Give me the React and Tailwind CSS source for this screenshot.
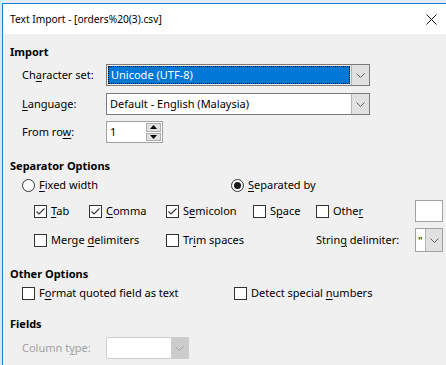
import React from "react";

const U = ({ children }) => <span className="underline underline-offset-2">{children}</span>;

const Chevron = ({ color = "#606060" }) => (
  <svg width="9" height="5" viewBox="0 0 9 5" fill="none">
    <path d="M0.5 0.5 L4.5 4.5 L8.5 0.5" stroke={color} strokeWidth="1" />
  </svg>
);

const Check = ({ checked }) => (
  <div className="w-[13px] h-[13px] border border-[#333] bg-white flex items-center justify-center shrink-0">
    {checked && (
      <svg width="11" height="11" viewBox="0 0 11 11" fill="none">
        <path d="M1.5 5.5 L4 8 L9.5 2.5" stroke="#333" strokeWidth="1.1" />
      </svg>
    )}
  </div>
);

const Radio = ({ on }) => (
  <div className="w-[13px] h-[13px] rounded-full border border-[#333] bg-white flex items-center justify-center shrink-0">
    {on && <div className="w-[7px] h-[7px] rounded-full bg-[#1a1a1a]" />}
  </div>
);

const CB = ({ checked, children, w }) => (
  <div className={`flex items-center gap-[4px] ${w || ""}`}>
    <Check checked={checked} />
    <span>{children}</span>
  </div>
);

const Heading = ({ children, mt }) => (
  <div className={`h-[16px] flex items-center font-bold leading-none ${mt}`}>{children}</div>
);

export default function App() {
  return (
    <div
      className="w-[446px] h-[365px] overflow-hidden flex bg-[#e4ebf2] text-[11px] text-black"
      style={{ fontFamily: "'Noto Sans', 'Open Sans', sans-serif" }}
    >
      <div className="w-[2px] shrink-0 bg-[#dde5ee]" />
      <div className="flex-1 flex flex-col mt-[3px] border-l border-t border-[#1883d7] min-w-0">
        <div className="h-[30px] bg-white flex items-center justify-between pl-[7px] pr-[8px] shrink-0">
          <span className="leading-none text-[10.2px]">Text Import - [orders%20(3).csv]</span>
          <svg width="11" height="11" viewBox="0 0 11 11" fill="none" className="mr-[1px]">
            <path d="M0.5 0.5 L10.5 10.5 M10.5 0.5 L0.5 10.5" stroke="#111" strokeWidth="1" />
          </svg>
        </div>
        <div className="flex-1 bg-[#f0f0f0] pl-[7px] pt-[9px] flex flex-col">
          <Heading>Import</Heading>
          <div className="pl-[12px] flex flex-col">
            <div className="mt-[5px] h-[22px] flex items-center">
              <span className="w-[84px]">Ch<U>a</U>racter set:</span>
              <div className="w-[264px] h-[22px] border border-[#7a7a7a] flex">
                <div className="flex-1 bg-[#0078d7] m-[1px] border border-dotted border-white outline outline-1 outline-dotted outline-black -outline-offset-1 flex items-center pl-[2px] text-white">
                  Unicode (UTF-8)
                </div>
                <div className="w-[18px] bg-[#e1e1e1] border-l border-[#b5b5b5] flex items-center justify-center">
                  <Chevron />
                </div>
              </div>
            </div>
            <div className="mt-[7px] h-[22px] flex items-center">
              <span className="w-[84px]"><U>L</U>anguage:</span>
              <div className="w-[264px] h-[22px] border border-[#7a7a7a] bg-white flex">
                <div className="flex-1 flex items-center pl-[3px]">Default - English (Malaysia)</div>
                <div className="w-[18px] bg-[#e1e1e1] border-l border-[#b5b5b5] flex items-center justify-center">
                  <Chevron />
                </div>
              </div>
            </div>
            <div className="mt-[6px] h-[22px] flex items-center">
              <span className="w-[84px]">From ro<U>w</U>:</span>
              <div className="w-[57px] h-[22px] border border-[#a0a0a0] bg-white flex">
                <div className="flex-1 flex items-center pl-[3px]">1</div>
                <div className="w-[17px] flex flex-col p-[1px] gap-[1px]">
                  <div className="flex-1 border border-[#adadad] bg-[#e1e1e1] flex items-center justify-center">
                    <svg width="7" height="4" viewBox="0 0 7 4"><path d="M0 4 L3.5 0 L7 4Z" fill="#000" /></svg>
                  </div>
                  <div className="flex-1 border border-[#adadad] bg-[#e1e1e1] flex items-center justify-center">
                    <svg width="7" height="4" viewBox="0 0 7 4"><path d="M0 0 L3.5 4 L7 0Z" fill="#000" /></svg>
                  </div>
                </div>
              </div>
            </div>
          </div>

          <Heading mt="mt-[14px]">Separator Options</Heading>
          <div className="pl-[12px] flex flex-col">
            <div className="mt-[4px] h-[16px] flex items-center">
              <div className="w-[209px] flex items-center gap-[4px]">
                <Radio />
                <span><U>F</U>ixed width</span>
              </div>
              <div className="flex items-center gap-[4px]">
                <Radio on />
                <span><U>S</U>eparated by</span>
              </div>
            </div>
            <div className="mt-[7px] h-[22px] flex items-center pl-[12px]">
              <CB checked w="w-[55px]"><U>T</U>ab</CB>
              <CB checked w="w-[77px]"><U>C</U>omma</CB>
              <CB checked w="w-[87px]">S<U>e</U>micolon</CB>
              <CB w="w-[63px]">S<U>p</U>ace</CB>
              <CB w="flex-1">Othe<U>r</U></CB>
              <div className="w-[28px] h-[22px] border border-[#a0a0a0] bg-white mr-[3px]" />
            </div>
            <div className="mt-[6px] h-[24px] flex items-center pl-[12px]">
              <CB w="w-[132px]">Merge <U>d</U>elimiters</CB>
              <CB w="w-[150px]">Tr<U>i</U>m spaces</CB>
              <span className="flex-1">Strin<U>g</U> delimiter:</span>
              <div className="w-[28px] h-[24px] border border-[#a0a0a0] bg-white flex mr-[3px]">
                <div className="w-[9px] flex items-center pl-[2px] leading-none">"</div>
                <div className="flex-1 bg-[#e1e1e1] border-l border-[#b5b5b5] flex items-center justify-center">
                  <Chevron />
                </div>
              </div>
            </div>
          </div>

          <Heading mt="mt-[13px]">Other Options</Heading>
          <div className="pl-[12px] mt-[4px] h-[16px] flex items-center">
            <CB w="w-[212px]">F<U>o</U>rmat quoted field as text</CB>
            <CB>Detect special <U>n</U>umbers</CB>
          </div>

          <Heading mt="mt-[14px]">Fields</Heading>
          <div className="pl-[12px] mt-[6px] h-[22px] flex items-center">
            <span className="w-[84px] text-[#a0a0a0]">Column t<U>y</U>pe:</span>
            <div className="w-[83px] h-[22px] border border-[#cccccc] bg-white flex">
              <div className="flex-1" />
              <div className="w-[17px] bg-[#cccccc] flex items-center justify-center">
                <Chevron color="#a8a8a8" />
              </div>
            </div>
          </div>
        </div>
      </div>
    </div>
  );
}
